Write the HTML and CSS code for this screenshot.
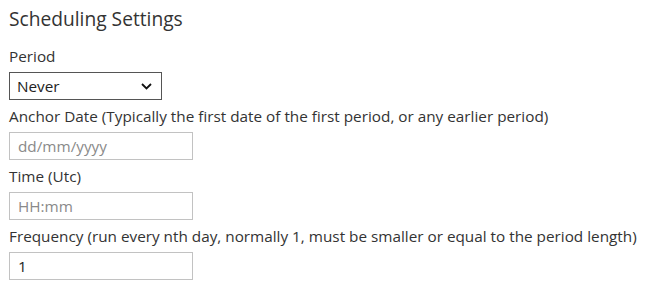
FILE: index.html
```html
<!DOCTYPE html>
<html lang="en">
<head>
    <meta charset="UTF-8">
    <meta name="viewport" content="width=device-width, initial-scale=1.0">
    <title>Scheduling Settings</title>
    <link rel="stylesheet" href="styles.css">
</head>
<body>
    <div class="settings">
        <h2 class="settings-title">Scheduling Settings</h2>

        <label class="field-label" for="period">Period</label>
        <div class="select-wrap">
            <select class="field-select" id="period">
                <option>Never</option>
                <option>Daily</option>
                <option>Weekly</option>
                <option>Monthly</option>
            </select>
            <svg class="select-arrow" width="11" height="7" viewBox="0 0 11 7">
                <path d="M1 1 L5.5 5.5 L10 1" fill="none" stroke="#111" stroke-width="1.8"/>
            </svg>
        </div>

        <label class="field-label" for="anchorDate">Anchor Date (Typically the first date of the first period, or any earlier period)</label>
        <input class="field-input" id="anchorDate" type="text" placeholder="dd/mm/yyyy">

        <label class="field-label" for="timeUtc">Time (Utc)</label>
        <input class="field-input" id="timeUtc" type="text" placeholder="HH:mm">

        <label class="field-label" for="frequency">Frequency (run every nth day, normally 1, must be smaller or equal to the period length)</label>
        <input class="field-input" id="frequency" type="text" value="1">
    </div>
</body>
</html>
```

FILE: styles.css
```css
* {
    margin: 0;
    padding: 0;
    box-sizing: border-box;
}

body {
    background-color: #fff;
    color: #333;
    font-family: "Open Sans", "Noto Sans", Arial, sans-serif;
    font-size: 15.3px;
}

.settings {
    display: flex;
    flex-direction: column;
    align-items: flex-start;
    padding: 5px 9px;
}

.settings-title {
    font-size: 19.2px;
    font-weight: normal;
    line-height: 27px;
    margin-bottom: 8px;
}

.field-label {
    display: block;
    line-height: 20px;
    padding: 6px 0;
    white-space: nowrap;
}

.select-wrap {
    position: relative;
}

.field-select {
    appearance: none;
    -webkit-appearance: none;
    width: 153px;
    height: 28px;
    border: 1px solid #555;
    border-radius: 0;
    background: #fff;
    color: #222;
    font-family: inherit;
    font-size: 15.3px;
    padding: 0 7px;
}

.select-arrow {
    position: absolute;
    right: 10px;
    top: 11px;
    pointer-events: none;
}

.field-input {
    width: 184px;
    height: 28px;
    border: 1px solid #c2c2c2;
    border-radius: 0;
    font-family: inherit;
    font-size: 15.3px;
    color: #222;
    padding: 0 8px;
    outline: none;
}

.field-input::placeholder {
    color: #8a8a8a;
}
```
